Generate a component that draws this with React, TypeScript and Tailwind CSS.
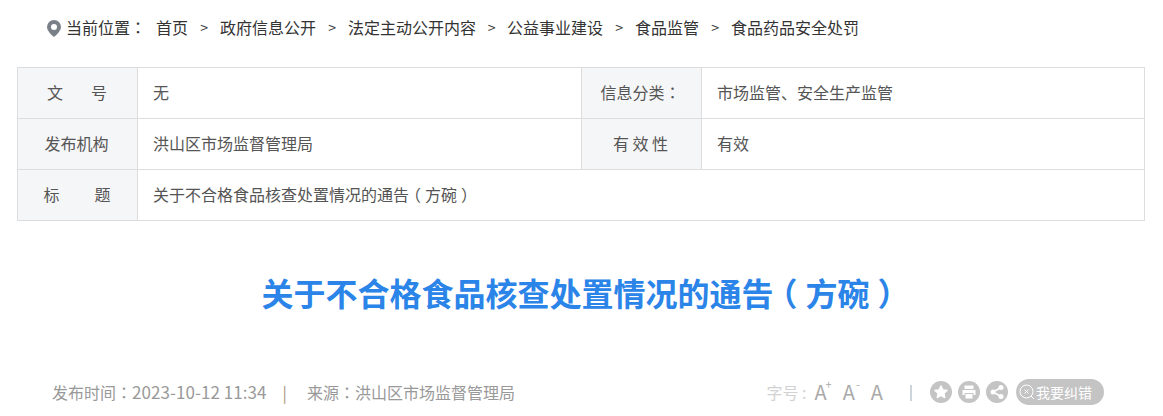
import { Fragment } from 'react';

const crumbs = ['首页', '政府信息公开', '法定主动公开内容', '公益事业建设', '食品监管', '食品药品安全处罚'];

// full-width punctuation sits centred in the TC cut, like the original font
function Punct({ children }: { children: React.ReactNode }) {
  return <span className="font-['Noto_Sans_CJK_TC',sans-serif]">{children}</span>;
}

// brackets: half-width advance from the font, then equal margins to centre them in the cell
function Bracket({ children }: { children: React.ReactNode }) {
  return <span className="inline-block mx-[0.25em] [font-feature-settings:'halt']">{children}</span>;
}

function Label({ children, last }: { children: React.ReactNode; last?: boolean }) {
  return (
    <div className={`flex items-center justify-center pb-[2px] pr-[2px] bg-[#f5f6f8] border-r border-[#dddddd] ${last ? '' : 'border-b'}`}>
      {children}
    </div>
  );
}

function Value({ children, last, right }: { children: React.ReactNode; last?: boolean; right?: boolean }) {
  return (
    <div className={`flex items-center pl-[15px] pb-[2px] border-[#dddddd] ${last ? '' : 'border-b'} ${right ? 'border-r' : ''}`}>
      {children}
    </div>
  );
}

function Round({ children }: { children: React.ReactNode }) {
  return (
    <span className="flex items-center justify-center w-[22px] h-[22px] rounded-full bg-[#c4c4c4]">{children}</span>
  );
}

export default function App() {
  return (
    <div className="w-[1163px] h-[416px] overflow-hidden bg-white text-[16px] text-[#555555] font-['Noto_Sans_CJK_SC','Microsoft_YaHei',sans-serif]">
      {/* Breadcrumb */}
      <div className="flex items-center h-[24px] mt-[15px] ml-[47px] text-[#333333]">
        <svg width="14" height="17" viewBox="0 0 14 17" className="mr-[5px] mt-[3px]">
          <path
            fillRule="evenodd"
            fill="#7a8088"
            d="M7 0a7 7 0 0 1 7 7c0 3.600-4 7.600-7 10C4 14.600 0 10.600 0 7A7 7 0 0 1 7 0zM7 4a3 3 0 1 0 0 6a3 3 0 0 0 0-6z"
          />
        </svg>
        <span className="w-[90px]">当前位置<Punct>：</Punct></span>
        {crumbs.map((c, i) => (
          <Fragment key={c}>
            {i > 0 && <span className={`text-center text-[14px] ${i === 3 ? 'w-[31px]' : 'w-[32px]'}`}>&gt;</span>}
            <span>{c}</span>
          </Fragment>
        ))}
      </div>

      {/* Info table */}
      <div className="grid grid-cols-[120px_444px_120px_1fr] grid-rows-[51px_51px_50px] w-[1128px] h-[154px] mt-[28px] ml-[17px] border border-[#dddddd]">
        <Label>
          <span className="flex justify-between w-[60px] ml-[1px]">
            <span>文</span>
            <span>号</span>
          </span>
        </Label>
        <Value right>无</Value>
        <Label>信息分类<Punct>：</Punct></Label>
        <Value>市场监管、安全生产监管</Value>
        <Label>发布机构</Label>
        <Value right>洪山区市场监督管理局</Value>
        <Label>有 效 性</Label>
        <Value>有效</Value>
        <Label last>
          <span className="flex justify-between w-[67px] ml-[1px]">
            <span>标</span>
            <span>题</span>
          </span>
        </Label>
        <div className="col-span-3 flex items-center pl-[15px] pb-[2px]">
          <span>
            关于不合格食品核查处置情况的通告<Bracket>（</Bracket>方碗<Bracket>）</Bracket>
          </span>
        </div>
      </div>

      {/* Title */}
      <h1 className="mt-[45px] text-center text-[32px] leading-[52px] font-bold text-[#2b84e8]">
        关于不合格食品核查处置情况的通告<Bracket>（</Bracket>方碗<Bracket>）</Bracket>
      </h1>

      {/* Meta row */}
      <div className="flex items-center justify-between h-[28px] mt-[60px] ml-[52px] mr-[59px] text-[#999999]">
        <div className="flex items-center">
          <span>
            发布时间<Punct>：</Punct>
            <span className="text-[17px] tracking-[0.06px]">2023-10-12 11:34</span>
          </span>
          <span className="ml-[16px] mr-[20px] text-[#a8957e]">|</span>
          <span>
            来源<Punct>：</Punct>洪山区市场监督管理局
          </span>
        </div>
        <div className="flex items-center">
          <span className="text-[#d2d2d2]">字号 :</span>
          <span className="relative ml-[8px] text-[20px] leading-none text-[#aaaaaa]">
            A<sup className="absolute -right-[5px] top-[2px] text-[11px]">+</sup>
          </span>
          <span className="relative ml-[16px] text-[20px] leading-none text-[#aaaaaa]">
            A<sup className="absolute -right-[5px] top-[2px] text-[11px]">-</sup>
          </span>
          <span className="ml-[16px] text-[20px] leading-none text-[#aaaaaa]">A</span>
          <span className="ml-[27px] mr-[18px] w-[2px] h-[16px] mt-[2px] bg-[#ccd4dc]" />
          <div className="flex items-center gap-[6px]">
            <Round>
              <svg width="16" height="16" viewBox="0 0 16 16">
                <path
                  fill="#ffffff"
                  stroke="#ffffff"
                  strokeWidth="1.500"
                  strokeLinejoin="round"
                  d="M8 2l1.800 3.900 4.200.5-3.100 2.900.8 4.200L8 11.400l-3.700 2.100.8-4.200L2 6.400l4.200-.5z"
                />
              </svg>
            </Round>
            <Round>
              <svg width="14" height="14" viewBox="0 0 14 14" fill="#ffffff">
                <rect x="2.500" y="0.500" width="9" height="3.500" />
                <path d="M0.500 5h13v5h-2V8h-9v2h-2z" />
                <rect x="3.500" y="9" width="7" height="4.500" />
              </svg>
            </Round>
            <Round>
              <svg width="16" height="16" viewBox="0 0 16 16">
                <path stroke="#ffffff" strokeWidth="1.500" fill="none" d="M12 3.500L4 8l8 4.500" />
                <circle cx="12" cy="3.500" r="2.500" fill="#ffffff" />
                <circle cx="4" cy="8" r="2.500" fill="#ffffff" />
                <circle cx="12" cy="12.500" r="2.500" fill="#ffffff" />
              </svg>
            </Round>
            <span className="flex items-center h-[26px] w-[88px] ml-[2px] pl-[3px] rounded-full bg-[#c4c4c4] text-[14px] text-white">
              <svg width="16" height="16" viewBox="0 0 16 16" fill="none" stroke="#ffffff" className="shrink-0 mr-[1px]">
                <circle cx="7.500" cy="7.500" r="6.500" />
                <path d="M5.500 5.500l4 4M9.500 5.500l-4 4M12 12l3 3" />
              </svg>
              我要纠错
            </span>
          </div>
        </div>
      </div>
    </div>
  );
}
